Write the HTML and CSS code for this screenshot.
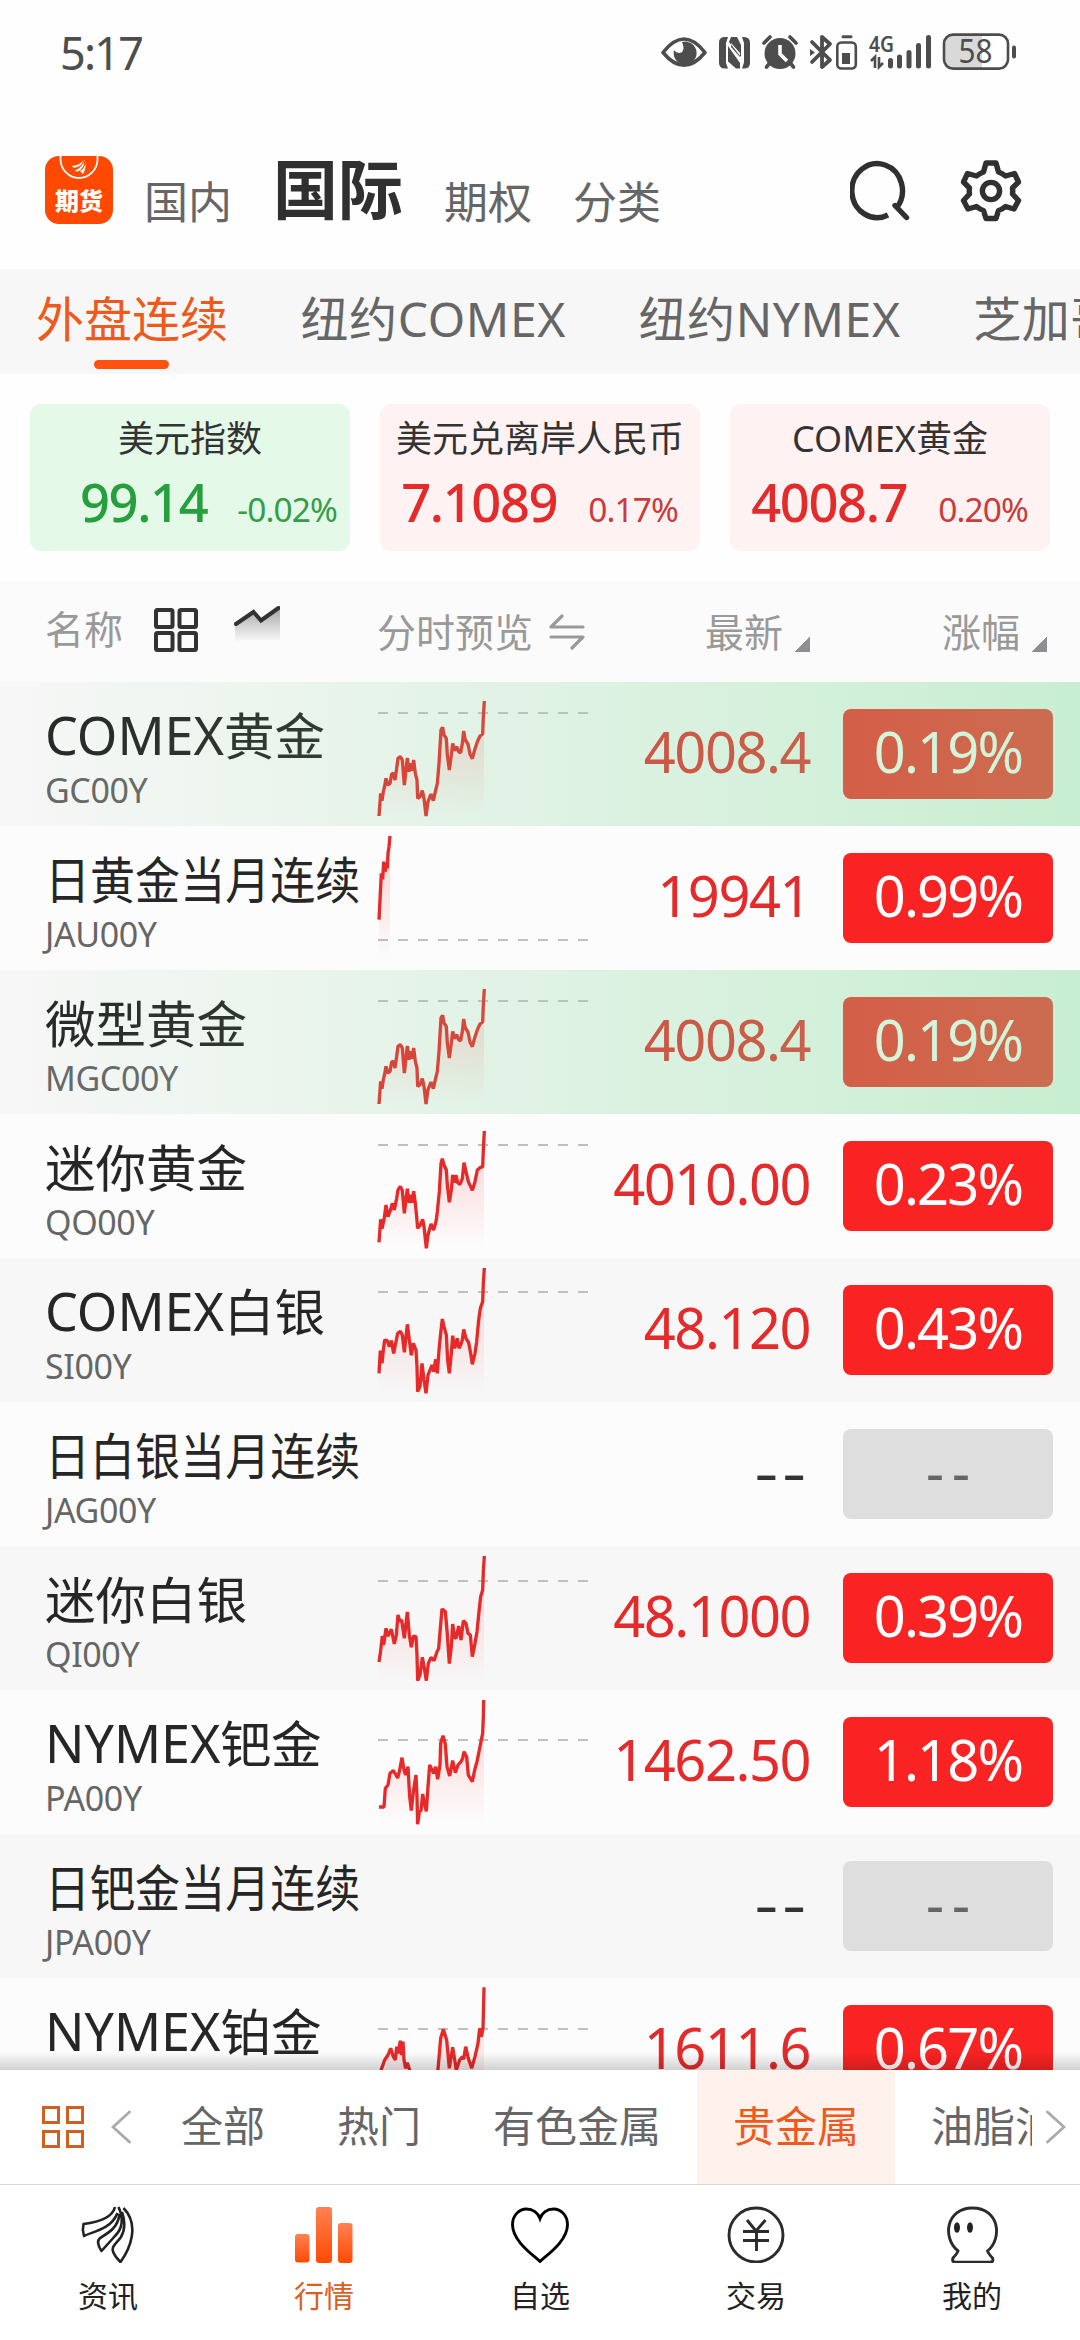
FILE: index.html
```html
<!DOCTYPE html>
<html lang="zh-CN">
<head>
<meta charset="utf-8">
<title>期货行情</title>
<link rel="stylesheet" href="styles.css">
</head>
<body>
<svg class="defs" width="0" height="0" aria-hidden="true">
  <defs>
    <linearGradient id="area" x1="0" y1="0" x2="0" y2="1">
      <stop offset="0" stop-color="#fa2222" stop-opacity=".2"/>
      <stop offset="1" stop-color="#fa2222" stop-opacity="0"/>
    </linearGradient>
    <linearGradient id="ember" x1="0" y1="0" x2="0" y2="1">
      <stop offset="0" stop-color="#ff8152"/>
      <stop offset="1" stop-color="#ff4a04"/>
    </linearGradient>
    <linearGradient id="shade" x1="0" y1="0" x2="0" y2="1">
      <stop offset="0" stop-color="#333" stop-opacity=".42"/>
      <stop offset=".85" stop-color="#333" stop-opacity="0"/>
    </linearGradient>
    <g id="gold">
      <path class="dash" d="M54 99H684"/><path class="fill" d="M57 408L62 340L66 362L70 335L74 318L78 295L83 315L90 310L95 282L100 280L105 300L110 265L114 235L121 230L127 240L133 315L142 234L147 275L152 250L156 272L161 240L166 280L171 300L173 355L180 350L187 332L192 355L198 408L204 365L213 342L220 362L226 335L232 310L237 250L240 200L243 150L248 142L252 165L259 175L262 225L268 270L274 225L278 190L284 212L290 200L296 215L302 218L307 190L311 153L316 180L324 192L330 222L337 236L344 210L352 185L360 168L368 162L370 110L372 63V408Z"/><path class="line" d="M57 408L62 340L66 362L70 335L74 318L78 295L83 315L90 310L95 282L100 280L105 300L110 265L114 235L121 230L127 240L133 315L142 234L147 275L152 250L156 272L161 240L166 280L171 300L173 355L180 350L187 332L192 355L198 408L204 365L213 342L220 362L226 335L232 310L237 250L240 200L243 150L248 142L252 165L259 175L262 225L268 270L274 225L278 190L284 212L290 200L296 215L302 218L307 190L311 153L316 180L324 192L330 222L337 236L344 210L352 185L360 168L368 162L370 110L373 63"/>
    </g>
  </defs>
</svg>
<div class="app">
  <div class="status">
    <span class="clock">5:17</span>
    <svg class="status-icons" viewBox="660 30 356 42">
      <g fill="none" stroke="#4d4d4d" stroke-width="3.6">
        <path d="M662 52.500Q683 25.500 704 52.500Q683 78 662 52.500Z" stroke-linejoin="round"/>
        <path d="M763 43l6-6M795 43l-6-6" stroke-linecap="round"/>
        <path d="M768 64l-2.500 3M790 64l2.500 3" stroke-linecap="round"/>
        <path d="M811 42L829 60L821 67V37L829 44L811 62" stroke-linejoin="round" stroke-linecap="round" stroke-width="3.800"/>
        <rect x="836.300" y="42.500" width="18.500" height="26" rx="4" stroke-width="2.600"/>
        <path d="M842 36.800H850" stroke-linecap="round" stroke-width="3"/>
        <path d="M889.500 60.500V66M898.500 57V66M908 52.500V66M917.500 45.500V66M927.500 37.500V66" stroke-linecap="round" stroke-width="5"/>
        <path d="M870 61l4-4V68M878 57V67l4-4" stroke-width="2.600"/>
      </g>
      <path fill="#4d4d4d" d="M681 42A11.500 11.500 0 1 1 673 50Q675 53 679 53Q685 51 681 42Z"/>
      <path fill="#4d4d4d" d="M724 37h3l-2 6v20l2 5.500h-3q-6 0-6-6v-20q0-5.500 6-5.500ZM730 37h6l4 8v12l-12-15ZM741 37h2q6 0 6 6v20q0 5.500-6 5.500h-2l2-6V43ZM727 46l12 17v5.500h-4l-8-7ZM730 47l9 10v-4l-9-10Z"/>
      <circle cx="779" cy="53.500" r="15.500" fill="#4d4d4d"/>
      <path d="M779 45v9l7 7" fill="none" stroke="#fff" stroke-width="3.600"/>
      <path fill="#4d4d4d" d="M809 49l5 3.500l-5 3.500ZM841 53h8v11h-8Z"/>
      <rect x="943" y="34.600" width="64" height="34" rx="9" fill="#fff"/>
      <path fill="#d9d9d9" d="M952 35h29v33h-29q-8 0-8-8V43q0-8 8-8Z"/>
      <rect x="943" y="34.600" width="64" height="34" rx="9" fill="none" stroke="#4d4d4d" stroke-width="2.600"/>
      <path d="M1013 47.500v9" stroke="#4d4d4d" stroke-width="4" stroke-linecap="round"/>
      <text class="t-net" x="868" y="51.500" textLength="25" lengthAdjust="spacingAndGlyphs">4G</text>
      <text class="t-bat" x="957.500" y="63" textLength="34" lengthAdjust="spacingAndGlyphs">58</text>
    </svg>
  </div>

  <header class="top">
    <div class="logo">
      <svg viewBox="0 0 68 28" width="68" height="28">
        <path d="M15.500 0V3A18.500 19 0 0 0 52.500 3V0" fill="none" stroke="#fff" stroke-width="1.800"/>
        <path fill="#fff" d="M39 3Q36 9 27 10Q28 14 36 9ZM39.500 3.500Q38 11 30 14.500Q33 18 38.500 10ZM40 4Q42 11 35 15L38 18Q42 11 40 4Z"/>
      </svg>
      <b>期货</b>
    </div>
    <span class="seg seg1">国内</span>
    <span class="seg-on">国际</span>
    <span class="seg seg3">期权</span>
    <span class="seg seg4">分类</span>
    <svg class="ic-search" viewBox="0 0 62 64" width="62" height="64">
      <g fill="none" stroke="#303030" stroke-width="5.400" stroke-linecap="round">
        <path d="M38 57A25.300 27 0 1 1 46.500 50" stroke-linecap="butt"/>
        <path d="M45 47.500L56.500 59.500"/>
      </g>
    </svg>
    <svg class="ic-gear" viewBox="0 0 62 64" width="62" height="64">
      <g fill="none" stroke="#303030" stroke-width="5.400" stroke-linejoin="round">
        <path d="M26 5H36L38.500 14Q42.500 15.500 45.500 18L54.500 15.500L58.500 24L52.500 30Q53 33 52.500 36L58.500 42.500L54 51L45.500 48.500Q42 51.500 38.500 52.500L36 60.500H26L23.500 52.500Q20 51.500 16.500 48.500L8 51L3.500 42.500L9.500 36Q9 33 9.500 30L3.500 24L7.500 15.500L16.500 18Q19.500 15.500 23.500 14Z"/>
        <circle cx="31" cy="33" r="8.600"/>
      </g>
    </svg>
  </header>

  <nav class="tabs">
    <span class="tab on">外盘连续</span>
    <span class="tab">纽约COMEX</span>
    <span class="tab">纽约NYMEX</span>
    <span class="tab">芝加哥</span>
  </nav>

  <section class="cards">
    <div class="card down"><h3>美元指数</h3><p><b>99.14</b><i>-0.02%</i></p></div>
    <div class="card up"><h3>美元兑离岸人民币</h3><p><b>7.1089</b><i>0.17%</i></p></div>
    <div class="card up"><h3>COMEX黄金</h3><p><b>4008.7</b><i>0.20%</i></p></div>
  </section>

  <div class="head">
    <span class="h-name">名称</span>
    <svg class="h-grid" viewBox="0 0 44 44" width="44" height="44"><g fill="none" stroke="#333" stroke-width="4"><rect x="2" y="2" width="16.500" height="17" rx="1.500"/><rect x="25.500" y="2" width="16.500" height="17" rx="1.500"/><rect x="2" y="25" width="16.500" height="17" rx="1.500"/><rect x="25.500" y="25" width="16.500" height="17" rx="1.500"/></g></svg>
    <svg class="h-trend" viewBox="0 0 46 44" width="46" height="44"><path d="M1 19L19 6L27 15L46 2V42H1Z" fill="url(#shade)"/><path d="M2 18L19.500 6L27 14.500L44.500 2" fill="none" stroke="#333" stroke-width="4" stroke-linecap="round"/></svg>
    <span class="h-chart">分时预览</span>
    <svg class="h-swap" viewBox="0 0 36 36" width="36" height="36"><path d="M13 2L2 13H34M2 23H34L23 34" fill="none" stroke="#999" stroke-width="3.200" stroke-linecap="round" stroke-linejoin="round"/></svg>
    <span class="h-last">最新</span><i class="tri"></i>
    <span class="h-chg">涨幅</span><i class="tri"></i>
  </div>

  <main class="list">
    <div class="row flash">
      <div class="name"><h4><span class="lat">COMEX</span>黄金</h4><small>GC00Y</small></div>
      <svg class="spark" viewBox="54 6 630 432"><use href="#gold"/></svg>
      <b class="last">4008.4</b><b class="badge">0.19%</b>
    </div>
    <div class="row">
      <div class="name"><h4 class="long">日黄金当月连续</h4><small>JAU00Y</small></div>
      <svg class="spark" viewBox="54 438 630 432"><path class="dash" d="M54 780H684"/><path class="fill" d="M57 719L60 660L64 580L68 598L71 545L76 575L82 545L84 520L87 500L90 468V840H54Z"/><path class="line" d="M57 719L60 660L64 580L68 598L71 545L76 575L79 548L82 565L84 520L87 500L90 468"/></svg>
      <b class="last">19941</b><b class="badge">0.99%</b>
    </div>
    <div class="row flash">
      <div class="name"><h4>微型黄金</h4><small>MGC00Y</small></div>
      <svg class="spark" viewBox="54 6 630 432"><use href="#gold"/></svg>
      <b class="last">4008.4</b><b class="badge">0.19%</b>
    </div>
    <div class="row">
      <div class="name"><h4>迷你黄金</h4><small>QO00Y</small></div>
      <svg class="spark" viewBox="54 -18 630 432"><path class="dash" d="M54 75H684"/><path class="fill" d="M57 367L62 298L66 326L72 300L78 255L84 290L92 268L97 250L103 270L110 235L114 210L121 199L127 212L133 280L142 206L147 248L154 225L156 248L161 214L166 250L170 290L173 325L181 315L188 298L192 320L199 385L204 345L213 312L221 330L228 305L232 275L238 215L243 130L247 116L252 135L259 150L262 195L268 247L274 210L278 165L283 188L288 165L293 188L300 193L307 175L312 128L318 155L325 185L332 200L337 211L345 185L352 150L360 143L368 140L370 90L372 33V385H57Z"/><path class="line" d="M57 367L62 298L66 326L72 300L78 255L84 290L92 268L97 250L103 270L110 235L114 210L121 199L127 212L133 280L142 206L147 248L154 225L156 248L161 214L166 250L170 290L173 325L181 315L188 298L192 320L199 385L204 345L213 312L221 330L228 305L232 275L238 215L243 130L247 116L252 135L259 150L262 195L268 247L274 210L278 165L283 188L288 165L293 188L300 193L307 175L312 128L318 155L325 185L332 200L337 211L345 185L352 150L360 143L368 140L370 90L373 33"/></svg>
      <b class="last">4010.00</b><b class="badge">0.23%</b>
    </div>
    <div class="row">
      <div class="name"><h4><span class="lat">COMEX</span>白银</h4><small>SI00Y</small></div>
      <svg class="spark" viewBox="54 414 630 432"><path class="dash" d="M54 516H684"/><path class="fill" d="M57 760L61 692L66 730L70 690L74 660L82 662L88 680L94 662L101 700L108 665L113 640L121 634L127 645L133 697L138 650L142 613L148 660L154 706L160 670L168 690L171 740L173 815L180 800L186 730L192 780L198 820L204 765L210 750L216 735L221 755L227 718L232 760L237 690L242 640L247 597L252 620L259 645L263 720L268 760L274 700L278 647L284 685L292 655L297 685L302 675L307 660L311 628L318 655L326 668L332 700L337 733L345 700L350 665L356 600L361 565L368 545L370 490L372 444V820H57Z"/><path class="line" d="M57 760L61 692L66 730L70 690L74 660L82 662L88 680L94 662L101 700L108 665L113 640L121 634L127 645L133 697L138 650L142 613L148 660L154 706L160 670L168 690L171 740L173 815L180 800L186 730L192 780L198 820L204 765L210 750L216 735L221 755L227 718L232 760L237 690L242 640L247 597L252 620L259 645L263 720L268 760L274 700L278 647L284 685L292 655L297 685L302 675L307 660L311 628L318 655L326 668L332 700L337 733L345 700L350 665L356 600L361 565L368 545L370 490L373 444"/></svg>
      <b class="last">48.120</b><b class="badge">0.43%</b>
    </div>
    <div class="row">
      <div class="name"><h4 class="long">日白银当月连续</h4><small>JAG00Y</small></div>
      <svg class="spark" viewBox="0 0 630 432"></svg>
      <b class="last none">--</b><b class="badge flat">--</b>
    </div>
    <div class="row">
      <div class="name"><h4>迷你白银</h4><small>QI00Y</small></div>
      <svg class="spark" viewBox="54 18 630 432"><path class="dash" d="M54 123H684"/><path class="fill" d="M57 366L61 340L67 288L71 315L78 265L84 288L94 268L103 312L109 285L114 225L120 245L125 240L133 295L142 216L148 285L154 322L160 288L168 290L171 345L173 422L180 405L187 352L193 385L199 422L205 370L213 352L222 362L230 338L236 325L241 265L246 207L256 215L261 270L268 371L274 320L278 252L284 292L288 295L296 258L303 300L310 242L318 250L324 280L331 285L337 350L345 310L351 275L357 215L362 170L368 150L370 95L372 48V422H57Z"/><path class="line" d="M57 366L61 340L67 288L71 315L78 265L84 288L94 268L103 312L109 285L114 225L120 245L125 240L133 295L142 216L148 285L154 322L160 288L168 290L171 345L173 422L180 405L187 352L193 385L199 422L205 370L213 352L222 362L230 338L236 325L241 265L246 207L256 215L261 270L268 371L274 320L278 252L284 292L288 295L296 258L303 300L310 242L318 250L324 280L331 285L337 350L345 310L351 275L357 215L362 170L368 150L370 95L373 48"/></svg>
      <b class="last">48.1000</b><b class="badge">0.39%</b>
    </div>
    <div class="row">
      <div class="name"><h4><span class="lat">NYMEX</span>钯金</h4><small>PA00Y</small></div>
      <svg class="spark" viewBox="54 450 630 432"><path class="dash" d="M54 600H684"/><path class="fill" d="M57 801L72 801L76 745L84 735L90 700L100 692L108 705L113 714L119 690L126 653L132 690L137 705L144 680L149 770L154 812L160 755L168 705L171 770L173 853L178 815L183 812L188 762L193 790L199 814L204 740L209 675L216 690L221 700L227 680L233 718L240 675L242 610L249 587L256 612L261 680L269 708L278 662L286 698L294 675L303 665L308 655L312 635L320 650L325 705L337 725L344 690L351 665L358 630L364 600L368 580L370 530L372 480V853H57Z"/><path class="line" d="M57 801L72 801L76 745L84 735L90 700L100 692L108 705L113 714L119 690L126 653L132 690L137 705L144 680L149 770L154 812L160 755L168 705L171 770L173 853L178 815L183 812L188 762L193 790L199 814L204 740L209 675L216 690L221 700L227 680L233 718L240 675L242 610L249 587L256 612L261 680L269 708L278 662L286 698L294 675L303 665L308 655L312 635L320 650L325 705L337 725L344 690L351 665L358 630L364 600L368 580L370 530L371 480"/></svg>
      <b class="last">1462.50</b><b class="badge">1.18%</b>
    </div>
    <div class="row">
      <div class="name"><h4 class="long">日钯金当月连续</h4><small>JPA00Y</small></div>
      <svg class="spark" viewBox="0 0 630 432"></svg>
      <b class="last none">--</b><b class="badge flat">--</b>
    </div>
    <div class="row">
      <div class="name"><h4><span class="lat">NYMEX</span>铂金</h4></div>
      <svg class="spark" viewBox="54 54 630 432"><path class="dash" d="M54 207H684"/><path class="fill" d="M64 328L74 305L84 285L92 265L100 290L106 300L113 250L121 242L129 245L132 300L137 325L142 308L149 330L173 440L200 440L234 328L242 235L250 208L260 240L268 325L278 262L289 330L299 300L307 290L317 260L325 295L335 325L345 290L354 250L359 205L369 205L371 130L372 82V440H60Z"/><path class="line" d="M57 390L64 328L74 300L84 285L92 265L100 290L106 300L110 260L115 280L121 242L125 285L129 245L132 300L137 325L142 308L149 330L173 440L200 440L234 328L242 235L250 208L260 240L268 325L278 262L289 330L299 300L307 290L311 298L317 260L325 295L335 325L345 290L354 250L359 205L364 230L369 205L371 130L372 82"/></svg>
      <b class="last">1611.6</b><b class="badge">0.67%</b>
    </div>
  </main>

  <div class="cats">
    <svg class="c-grid" viewBox="0 0 42 42" width="42" height="42"><g fill="none" stroke="#d0601f" stroke-width="3"><rect x="1.500" y="1.500" width="15" height="15"/><rect x="25.500" y="1.500" width="15" height="15"/><rect x="1.500" y="25.500" width="15" height="15"/><rect x="25.500" y="25.500" width="15" height="15"/></g></svg>
    <svg class="c-prev" viewBox="0 0 20 34" width="20" height="34"><path d="M18.500 2L2 17L18.500 32" fill="none" stroke="#a9a9ad" stroke-width="2.800" stroke-linecap="round"/></svg>
    <div class="c-list">
      <span>全部</span><span>热门</span><span>有色金属</span><span class="on">贵金属</span><span>油脂油料</span>
    </div>
    <svg class="c-next" viewBox="0 0 20 34" width="20" height="34"><path d="M1.500 2L18 17L1.500 32" fill="none" stroke="#a9a9ad" stroke-width="2.800" stroke-linecap="round"/></svg>
  </div>

  <nav class="bottom">
    <div class="item">
      <svg viewBox="0 0 60 60" width="60" height="60"><g fill="none" stroke="#222" stroke-width="2.600" stroke-linejoin="round"><path d="M37 4C34 16 18 19.500 5.500 21Q4 27 6 33C13 29 33 27 39.500 10"/><path d="M40.500 4C46 16 45 25 37 33L23.500 48Q17.500 39 22 35C30 30 40 25 41.500 11"/><path d="M44 9C47.500 19 47 27 43 34C38 41 33.500 43 35 48.500Q36.500 53 42.500 59C52 46 62 22 45.500 5"/></g></svg>
      <span>资讯</span>
    </div>
    <div class="item on">
      <svg viewBox="0 0 60 60" width="60" height="60"><g fill="url(#ember)"><rect x="1" y="31" width="14.500" height="28.500" rx="3"/><rect x="22" y="4" width="16" height="56" rx="3"/><rect x="44" y="20" width="14.500" height="40" rx="3"/></g></svg>
      <span>行情</span>
    </div>
    <div class="item">
      <svg viewBox="0 0 60 60" width="60" height="60"><path d="M30 58.500C24 52.500 2.500 38.500 2.500 21.500C2.500 12.500 9 6 16.500 6C23 6 28 10 30 15.500C32 10 37 6 43.500 6C51 6 57.500 12.500 57.500 21.500C57.500 38.500 36 52.500 30 58.500Z" fill="none" stroke="#000" stroke-width="2.900"/></svg>
      <span>自选</span>
    </div>
    <div class="item">
      <svg viewBox="0 0 60 60" width="60" height="60"><g fill="none" stroke="#2b2b2b" stroke-width="2.900"><circle cx="30" cy="32" r="27"/><path d="M21 17L30 28L39.500 17M17 28.500H43M17 37.500H43M30.500 28V48"/></g></svg>
      <span>交易</span>
    </div>
    <div class="item">
      <svg viewBox="0 0 60 60" width="60" height="60"><path d="M16 48C0 35 4 5 30.500 5C57 5 61 35 45.500 48Q46 50 50.500 55Q52 59 48 59.300H13.500Q9.500 59 11 55Q15.500 50 16 48Z" fill="none" stroke="#2b2b2b" stroke-width="2.900"/><ellipse cx="15" cy="24.500" rx="3" ry="5.200" fill="#222"/><ellipse cx="28" cy="24.500" rx="3" ry="5.200" fill="#222"/></svg>
      <span>我的</span>
    </div>
  </nav>
</div>
</body>
</html>
```
FILE: styles.css
```css
* { box-sizing: border-box; margin: 0; padding: 0; }
body {
  width: 1080px;
  height: 2340px;
  overflow: hidden;
  background: #fefefe;
  font-family: "Noto Sans", "Noto Sans CJK SC", sans-serif;
  color: #333;
}
.defs { position: absolute; }
svg { display: block; flex: none; }
span, b, i, small, h3, h4 { white-space: nowrap; font-style: normal; font-weight: 400; }
.app { display: flex; flex-direction: column; height: 2340px; }

/* status bar */
.status { height: 106px; flex: none; display: flex; justify-content: space-between; padding: 0 63px 0 60px; }
.clock { font-size: 45px; line-height: 106px; letter-spacing: -1.8px; color: #4d4d4d; }
.status-icons { width: 356px; height: 42px; margin-top: 30px; }
.t-net { font: 600 21px "Noto Sans", sans-serif; fill: #4d4d4d; }
.t-bat { font: 400 33px "Noto Sans", sans-serif; fill: #4d4d4d; }

/* title row */
.top { height: 163px; flex: none; display: flex; align-items: center; padding: 5px 58px 0 45px; }
.logo {
  width: 68px; height: 68px; border-radius: 14px; background: #ff4800; color: #fff;
  display: flex; flex-direction: column; align-items: center; overflow: hidden;
}
.logo b { font-size: 24px; font-weight: 900; line-height: 34px; }
.seg { font-size: 44px; line-height: 60px; color: #666; padding-top: 23px; }
.seg1 { margin-left: 31px; }
.seg-on { font-size: 65px; font-weight: 700; line-height: 86px; padding-bottom: 3px; color: #303030; margin-left: 41px; }
.seg3 { margin-left: 41px; }
.seg4 { margin-left: 41px; }
.ic-search { margin-left: auto; }
.ic-gear { margin-left: 48px; }

/* exchange tabs */
.tabs { height: 105px; flex: none; background: #f7f7f7; display: flex; gap: 72.5px; padding-left: 36px; overflow: hidden; }
.tab { font-size: 48px; line-height: 99px; letter-spacing: .6px; color: #666; display: flex; flex-direction: column; align-items: center; flex: none; }
.tab.on { color: #ed5a1e; letter-spacing: 0; }
.tab.on::after { content: ""; width: 75px; height: 9px; border-radius: 5px; background: #ff5211; margin: -8px 2px 0 0; }

/* index cards */
.cards { height: 207px; flex: none; padding: 30px 30px 0; display: grid; grid-template-columns: repeat(3, 320px); gap: 30px; align-items: start; }
.card { height: 147px; border-radius: 11px; text-align: center; }
.card h3 { font-size: 36px; line-height: 50px; padding-top: 10px; color: #333; }
.card p { display: flex; justify-content: flex-end; align-items: baseline; line-height: 72px; padding-top: 2px; }
.card b { font-size: 52.5px; letter-spacing: -1.4px; font-weight: 500; }
.card i { font-size: 33.5px; letter-spacing: -.9px; }
.down { background: #e4f9e8; color: #25a03c; }
.up { background: #fff2f2; color: #e32b2b; }
.down p { padding-right: 13px; }
.down b { margin-right: 30px; }
.down i { color: #359c48; }
.up p { padding-right: 22px; }
.up b { margin-right: 31px; }
.up i { color: #c93c3c; }

/* column headings */
.head { height: 101px; flex: none; background: #fbfbfb; display: flex; align-items: flex-start; padding-left: 45px; color: #999; font-size: 39px; line-height: 50px; }
.h-name { padding-top: 23px; }
.h-grid { margin: 27px 0 0 31px; }
.h-trend { margin: 25px 0 0 36px; }
.h-chart { padding-top: 26px; margin-left: 97px; }
.h-swap { margin: 33px 0 0 16px; }
.h-last { padding-top: 26px; margin-left: 120px; }
.h-chg { padding-top: 26px; margin-left: 132px; }
.tri { width: 15px; height: 15px; margin: 56px 0 0 12px; background: linear-gradient(135deg, transparent 50%, #8e8e93 50%); }

/* quotes */
.list { height: 1388px; flex: none; overflow: hidden; position: relative; }
.list::after { content: ""; position: absolute; left: 0; right: 0; bottom: 0; height: 18px; background: linear-gradient(transparent, rgba(0,0,0,.17)); }
.row { height: 144px; position: relative; display: grid; grid-template-columns: 333px 210px 222px 210px; padding-left: 45px; background: #fcfcfc; }
.row:nth-child(odd) { background: #f7f7f7; }
.flash::after { content: ""; position: absolute; inset: 0; background: linear-gradient(90deg, rgba(129,224,152,0), rgba(129,224,152,.4)); }
.name h4 { font-size: 50.5px; line-height: 60px; padding-top: 24px; color: #262626; }
.lat { font-size: 52px; line-height: 50px; }
.long { transform: scaleX(.892); transform-origin: 0 0; }
.name small { display: block; font-size: 34px; line-height: 44px; padding-top: 2px; letter-spacing: -.4px; color: #666; }
.spark { width: 210px; height: 144px; overflow: visible; }
.dash { stroke: #c0c0c0; stroke-width: 6; stroke-dasharray: 30 30; fill: none; }
.fill { fill: url(#area); }
.line { fill: none; stroke: #e62a2a; stroke-width: 10; stroke-linejoin: bevel; }
.last { font-size: 56px; line-height: 138px; letter-spacing: -1.5px; text-align: right; color: #e42b2b; }
.badge { height: 90px; margin: 27px 0 0 33px; width: 210px; border-radius: 8px; background: #fa2323; color: #fff; font-size: 56px; line-height: 84px; letter-spacing: -1.8px; text-align: center; }
.none { color: #333; letter-spacing: 3px; transform: scaleX(1.32); transform-origin: 100% 0; }
.flat { background: #dedede; color: #666; letter-spacing: 8px; text-indent: 8px; }

/* category strip */
.cats { height: 115px; flex: none; background: #fff; border-bottom: 1px solid #d8d8d8; display: flex; align-items: center; padding-left: 42px; }
.c-prev { margin-left: 27px; }
.c-list { display: flex; width: 887px; overflow: hidden; margin-left: 14px; }
.c-list span { flex: none; padding: 0 36px; font-size: 42px; line-height: 112px; padding-bottom: 2px; color: #666; }
.c-list .on { background: #fff1ec; color: #ee5a1e; }
.c-next { margin-left: 14px; }

/* bottom navigation */
.bottom { height: 155px; flex: none; background: #fff; display: grid; grid-template-columns: repeat(5, 1fr); }
.item { display: flex; flex-direction: column; align-items: center; padding-top: 18px; font-size: 30px; line-height: 40px; color: #222; }
.item span { margin-top: 13px; }
.item.on { color: #d9601f; }
```
